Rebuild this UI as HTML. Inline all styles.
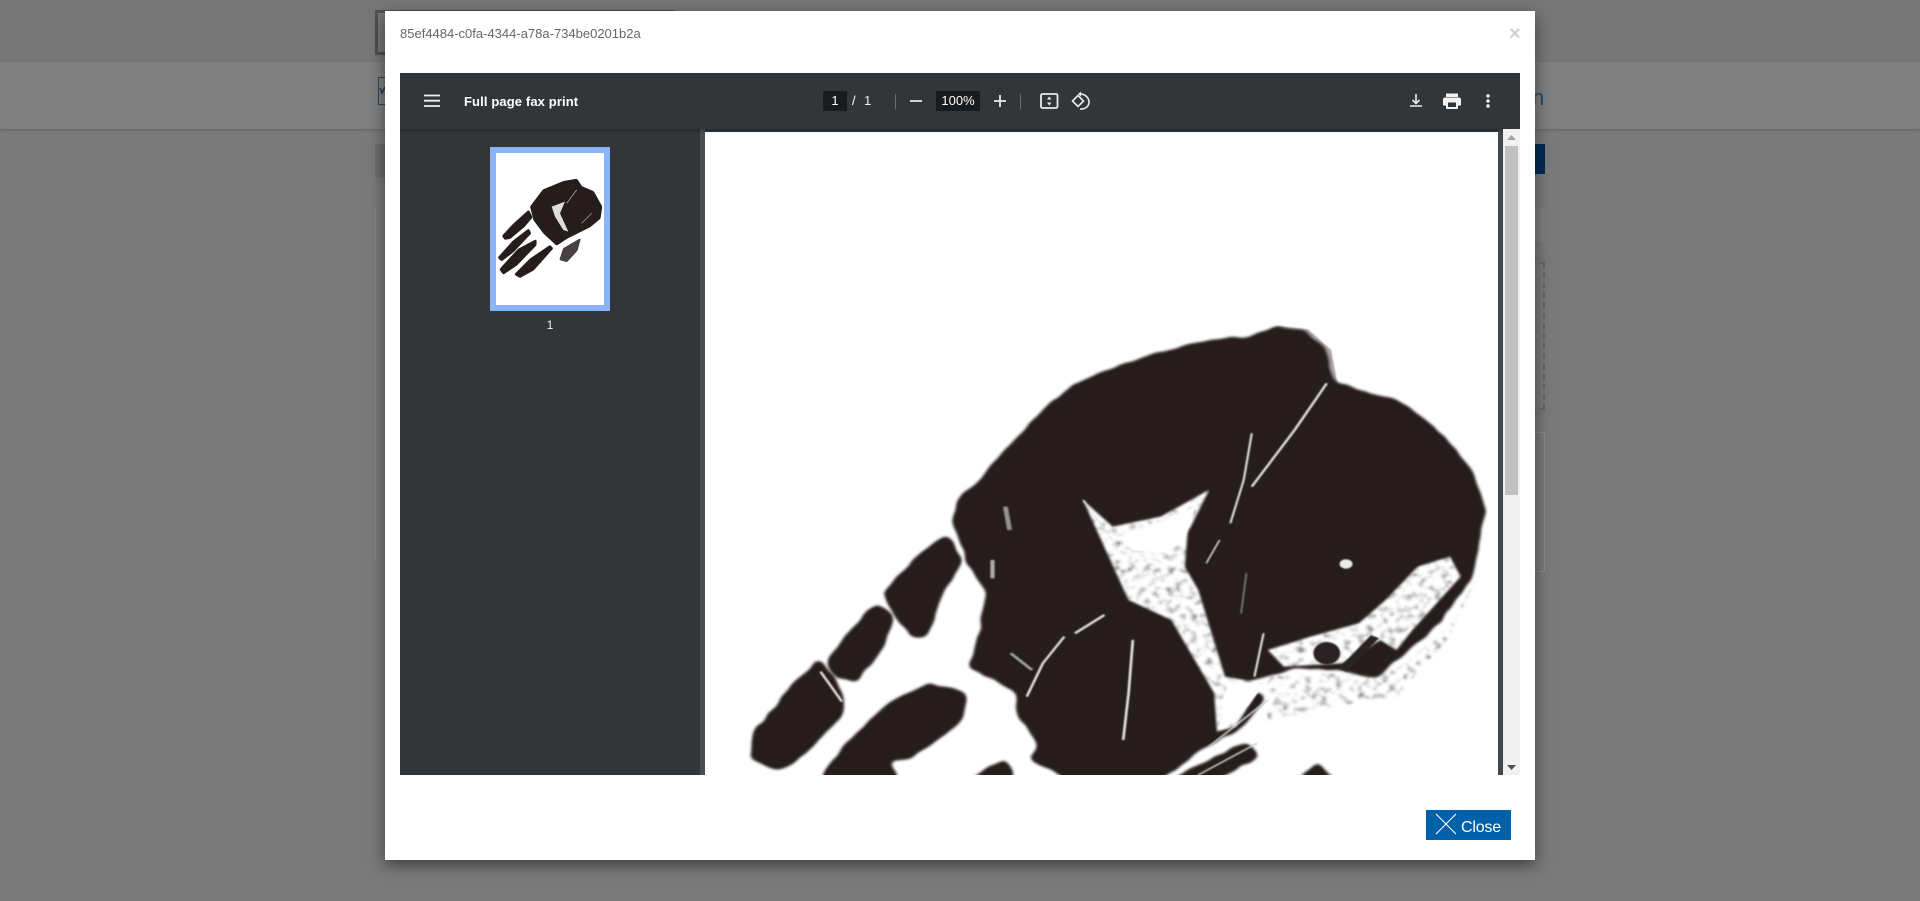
<!DOCTYPE html>
<html>
<head>
<meta charset="utf-8">
<title>Full page fax print</title>
<style>
html,body{margin:0;padding:0;width:1920px;height:901px;overflow:hidden;background:#7a7a7a;font-family:"Liberation Sans",sans-serif}
.a{position:absolute;display:block}
svg{position:absolute;left:0;top:0;overflow:visible}
.t{position:absolute;white-space:nowrap;line-height:20px}
</style>
</head>
<body>
<div class="a" style="left:0;top:0;width:1920px;height:901px;background:#7a7a7a"></div>
<div class="a" style="left:0;top:0;width:1920px;height:62px;background:#777"></div>
<div class="a" style="left:0;top:62px;width:1920px;height:67px;background:#808080;box-shadow:0 1px 3px rgba(0,0,0,.2)"></div>
<div class="a" style="left:375px;top:10px;width:300px;height:45px;box-sizing:border-box;border:3px solid #505050"></div>
<div class="a" style="left:378px;top:77px;width:10px;height:28px;box-sizing:border-box;border:1px solid #2b4560"></div>
<svg width="1920" height="901"><path d="M380,88L382,93L385,87" fill="none" stroke="#1c3a5a" stroke-width="1.500"/></svg>
<div class="a" style="left:375px;top:144px;width:10px;height:34px;background:#6e6e6e"></div>
<div class="a" style="left:375px;top:208px;width:1px;height:352px;background:#868686"></div>
<div class="t" style="left:1532px;top:88px;font-size:22px;color:#1d4d78">n</div>
<div class="a" style="left:1530px;top:144px;width:15px;height:30px;background:#002d57"></div>
<div class="a" style="left:1530px;top:208px;width:15px;height:34px;background:#7f7f7f"></div>
<div class="a" style="left:1530px;top:262px;width:15px;height:148px;box-sizing:border-box;border:2px dashed #666;border-left:0"></div>
<div class="a" style="left:1530px;top:432px;width:15px;height:140px;box-sizing:border-box;border:1px solid #8a8a8a;border-left:0"></div>

<div class="a" style="left:385px;top:11px;width:1150px;height:849px;background:#fff;box-shadow:0 5px 15px rgba(0,0,0,.5)"></div>
<div class="t" style="left:400px;top:24px;font-size:13px;color:#666">85ef4484-c0fa-4344-a78a-734be0201b2a</div>
<div class="t" style="left:1509px;top:24px;font-size:20px;font-weight:bold;color:#cfcfcf">×</div>

<div class="a" style="left:400px;top:73px;width:1120px;height:702px;background:#323639;overflow:hidden">
  <div class="a" style="left:300px;top:56px;width:5px;height:646px;background:#4a4d50"></div>
  <div class="a" style="left:1098px;top:56px;width:5px;height:646px;background:#44484a"></div>
  <div class="a" style="left:305px;top:59px;width:793px;height:643px;background:#fff;overflow:hidden">
    <svg width="793" height="643" viewBox="705 132 793 643" style="overflow:hidden">
      <defs>
        <filter id="round" x="-15%" y="-15%" width="130%" height="130%">
          <feTurbulence type="fractalNoise" baseFrequency=".06 .04" numOctaves="2" seed="4" result="t"/>
          <feDisplacementMap in="SourceGraphic" in2="t" scale="20" xChannelSelector="R" yChannelSelector="G" result="d"/>
          <feGaussianBlur in="d" stdDeviation="8,12" result="b"/>
          <feComponentTransfer in="b" result="th"><feFuncA type="linear" slope="5" intercept="-2"/></feComponentTransfer>
          <feGaussianBlur in="th" stdDeviation="2.500,3.500"/>
        </filter>
        <filter id="noise" x="-5%" y="-5%" width="110%" height="110%">
          <feTurbulence type="fractalNoise" baseFrequency=".07 .05" numOctaves="2" seed="7" result="t"/>
          <feColorMatrix in="t" type="matrix" values="0 0 0 0 .25  0 0 0 0 .22  0 0 0 0 .22  3 0 0 0 -1.450" result="c"/>
          <feComposite in="c" in2="SourceAlpha" operator="in" result="s"/>
          <feMerge result="m"><feMergeNode in="SourceGraphic"/><feMergeNode in="s"/></feMerge>
          <feGaussianBlur in="m" stdDeviation="2.500,3.500"/>
        </filter>
        <filter id="soft" x="-15%" y="-15%" width="130%" height="130%"><feGaussianBlur stdDeviation="1.500,2"/></filter>
      </defs>
      <g transform="translate(700,300) scale(.5357,.3333)">
        <g filter="url(#noise)" fill="#fff">
          <path d="M1060,1130L1300,1110L1400,980L1450,830L1400,1010L1300,1190L1250,1200L1130,1240L1060,1260Z"/>
        </g>
        <g filter="url(#soft)" fill="#8b8587">
          <path d="M1000,140L1080,78L1135,88L1178,150L1190,250L1150,240L1100,170Z" opacity=".75"/>
        </g>
        <g fill="#251c1f">
          <path filter="url(#round)" d="M470,650L485,585L525,540L555,475L605,390L635,340L695,255L765,205L860,155L950,120L1020,112L1080,80L1130,90L1170,150L1185,245L1240,275L1305,300L1375,385L1435,495L1468,630L1452,760L1435,845L1385,965L1335,1035L1262,1138L1190,1110L1110,1105L1050,1135L1000,1150L1060,1190L1005,1295L965,1325L935,1350L860,1440L690,1440L612,1375L632,1340L590,1235L590,1175L500,1105L512,1060L535,870L495,785Z"/>
          <path filter="url(#round)" d="M342,880L405,765L462,700L492,790L452,885L425,1012L398,1015L360,945Z"/>
          <path filter="url(#round)" d="M328,908L362,945L342,1050L290,1150L248,1130L238,1078L287,978Z"/>
          <path filter="url(#round)" d="M222,1075L262,1150L272,1235L205,1350L150,1418L95,1380L97,1305L165,1165Z"/>
          <path filter="url(#round)" d="M430,1148L498,1178L488,1265L395,1378L352,1382L375,1440L218,1440L285,1305L365,1195Z"/>
          <path filter="url(#round)" d="M495,1440L570,1372L590,1440Z"/>
          <path filter="url(#round)" d="M870,1440L1020,1325L1048,1370L965,1440Z"/>
          <path filter="url(#round)" d="M1110,1440L1150,1388L1200,1440Z"/>
        </g>
        <g filter="url(#noise)" fill="#fff">
          <path d="M715,600L770,680L860,650L950,570L910,700L905,800L930,870L980,1130L1050,1150L1000,1280L965,1295L960,1180L880,960L800,900L760,760Z"/>
          <path d="M1060,1050L1140,1010L1230,970L1280,900L1340,800L1400,770L1420,830L1330,990L1300,1050L1270,1020L1200,1090L1090,1100Z"/>
        </g>
        <g filter="url(#soft)">
          <path fill="#fff" d="M790,700L870,660L925,620L905,720L860,760L810,750Z"/>
          <path fill="#fff" d="M968,1285L985,1145L1055,1150L1000,1265Z"/>
          <ellipse cx="1170" cy="1060" rx="25" ry="34" fill="#2a2124"/>
          <path fill="none" stroke="#2a2124" stroke-width="18" d="M1260,1010L1200,1110"/>
          <ellipse cx="1206" cy="792" rx="12" ry="14" fill="#eee"/>
          <g fill="none" stroke="#e8e4e4">
            <path stroke-width="5" d="M1170,250L1110,390L1030,560"/>
            <path stroke-width="4" d="M1030,400L1015,540L990,670"/>
            <path stroke-width="3" d="M970,720L945,790"/>
            <path stroke-width="3" stroke="#8c8283" d="M1020,820L1010,940"/>
            <path stroke-width="4" d="M1052,1000L1035,1130"/>
            <path stroke-width="5" d="M808,1020L800,1180L790,1320"/>
            <path stroke-width="5" d="M680,1010L640,1090L610,1190"/>
            <path stroke-width="6" d="M755,945L700,1000"/>
            <path stroke-width="5" d="M225,1115L265,1205"/>
            <path stroke-width="9" stroke="#9a9090" d="M570,620L578,690"/>
            <path stroke-width="8" stroke="#b0a8a8" d="M546,780L546,835"/>
            <path stroke-width="6" stroke="#aaa" d="M580,1060L620,1110"/>
            <path stroke-width="4" stroke="#ccc" d="M1060,1200L950,1340M1040,1330L930,1425"/>
            <path stroke-width="3" d="M715,600L770,720"/>
          </g>
        </g>
      </g>
    </svg>
  </div>
  <div class="a" style="left:0;top:0;width:1120px;height:56px;background:#323639;box-shadow:0 1px 4px rgba(0,0,0,.35)"></div>
  <div class="a" style="left:1103px;top:56px;width:17px;height:646px;background:#f1f1f1"></div>
  <div class="a" style="left:1105px;top:73px;width:13px;height:349px;background:#c1c1c1"></div>
  <svg width="1120" height="702">
    <path d="M1107,67L1111.500,62L1116,67Z" fill="#a3a3a3"/>
    <path d="M1107,692L1116,692L1111.500,697Z" fill="#505050"/>
  </svg>
</div>

<div class="a" style="left:490px;top:147px;width:120px;height:164px;box-sizing:border-box;border:6px solid #8ab4f8;background:#fff"></div>
<svg width="1920" height="901" style="pointer-events:none">
  <defs>
    <filter id="tr" x="-20%" y="-20%" width="140%" height="140%">
      <feGaussianBlur stdDeviation="2.500" result="b"/>
      <feComponentTransfer in="b" result="th"><feFuncA type="linear" slope="4" intercept="-1.300"/></feComponentTransfer>
      <feGaussianBlur in="th" stdDeviation="1"/>
    </filter>
  </defs>
  <g transform="translate(400,70) scale(.3333)">
    <g fill="#251c1f" stroke="#251c1f" stroke-width="3" stroke-linejoin="round">
      <path filter="url(#tr)" d="M392,410L430,360L490,335L530,328L545,350L580,365L605,410L600,445L570,470L530,490L500,505L470,525L432,490L402,450Z"/>
      <path filter="url(#tr)" d="M308,498L340,463L386,422L396,442L372,470L330,505L315,508Z"/>
      <path filter="url(#tr)" d="M295,563L340,513L386,478L392,490L340,545L305,572Z"/>
      <path filter="url(#tr)" d="M300,598L355,538L408,510L408,525L350,585L310,612Z"/>
      <path filter="url(#tr)" d="M345,613L390,568L450,527L458,535L400,600L360,622Z"/>
    </g>
    <path fill="#4a4144" filter="url(#tr)" stroke="#4a4144" stroke-width="6" d="M482,568L492,537L538,510L530,540L500,573Z"/>
    <path fill="#ddd" d="M455,410L495,395L480,430L505,485L490,480L465,440Z"/>
    <path fill="none" stroke="#bbb" stroke-width="2" d="M530,360L500,400M545,460L575,430"/>
  </g>
  <g stroke="#f1f1f1" stroke-width="1.800" fill="none">
    <path d="M424,95.500H440M424,100.700H440M424,106H440"/>
  </g>
  <path d="M895.500,94V109M1020.500,94V109" stroke="#6a6d70" stroke-width="1"/>
  <path d="M910,101H922M994,101H1006M1000,95V107" stroke="#e8eaeb" stroke-width="1.800" fill="none"/>
  <rect x="1041" y="94" width="16.500" height="14" rx="1.500" fill="none" stroke="#e8eaeb" stroke-width="1.800"/>
  <path d="M1049.200,96.500L1051.500,99.500H1047ZM1049.200,105.500L1051.500,102.500H1047Z" fill="#e8eaeb"/>
  <path d="M1072.500,101L1078,95.500L1083.500,101L1078,106.500Z" fill="none" stroke="#e8eaeb" stroke-width="1.600"/>
  <path d="M1079,94C1084,93.500 1089,97 1089,102C1089,106.500 1085,109.500 1080,109" fill="none" stroke="#e8eaeb" stroke-width="1.600"/>
  <path d="M1081,91.500L1078,94L1081,96.500Z" fill="#e8eaeb"/>
  <path d="M1416,94V103M1412.500,100L1416,103.500L1419.500,100M1410,106H1422" fill="none" stroke="#e8eaeb" stroke-width="1.600"/>
  <path d="M1446,93.500H1458V97H1446ZM1445,97.500H1459C1460.300,97.500 1461,98.500 1461,99.500V105.500H1458V109H1446V105.500H1443V99.500C1443,98.500 1443.700,97.500 1445,97.500Z" fill="#f1f1f1"/>
  <rect x="1448" y="102.500" width="8" height="4.500" fill="#323639"/>
  <g fill="#f1f1f1"><circle cx="1488" cy="96" r="1.700"/><circle cx="1488" cy="101" r="1.700"/><circle cx="1488" cy="106" r="1.700"/></g>
</svg>
<div class="a" style="left:823px;top:91px;width:24px;height:20px;background:#191b1c"></div>
<div class="a" style="left:936px;top:91px;width:44px;height:20px;background:#191b1c"></div>
<div class="t" style="left:464px;top:92px;font-size:13px;font-weight:bold;color:#fff;letter-spacing:.12px">Full page fax print</div>
<div class="t" style="left:823px;top:91px;width:24px;text-align:center;font-size:13px;color:#fff">1</div>
<div class="t" style="left:852px;top:91px;font-size:13px;color:#fff">/</div>
<div class="t" style="left:864px;top:91px;font-size:13px;color:#f1f1f1">1</div>
<div class="t" style="left:936px;top:91px;width:44px;text-align:center;font-size:13px;color:#fff">100%</div>
<div class="t" style="left:490px;top:315px;width:120px;text-align:center;font-size:12px;color:#f1f1f1">1</div>

<div class="a" style="left:1426px;top:810px;width:85px;height:30px;background:#0060a9"></div>
<svg width="1920" height="901"><path d="M1436,814L1456,834M1456,814L1436,834" stroke="#fff" stroke-width="1.100" fill="none"/></svg>
<div class="t" style="left:1461px;top:818px;font-size:16px;color:#fff;letter-spacing:-.2px">Close</div>
</body>
</html>
